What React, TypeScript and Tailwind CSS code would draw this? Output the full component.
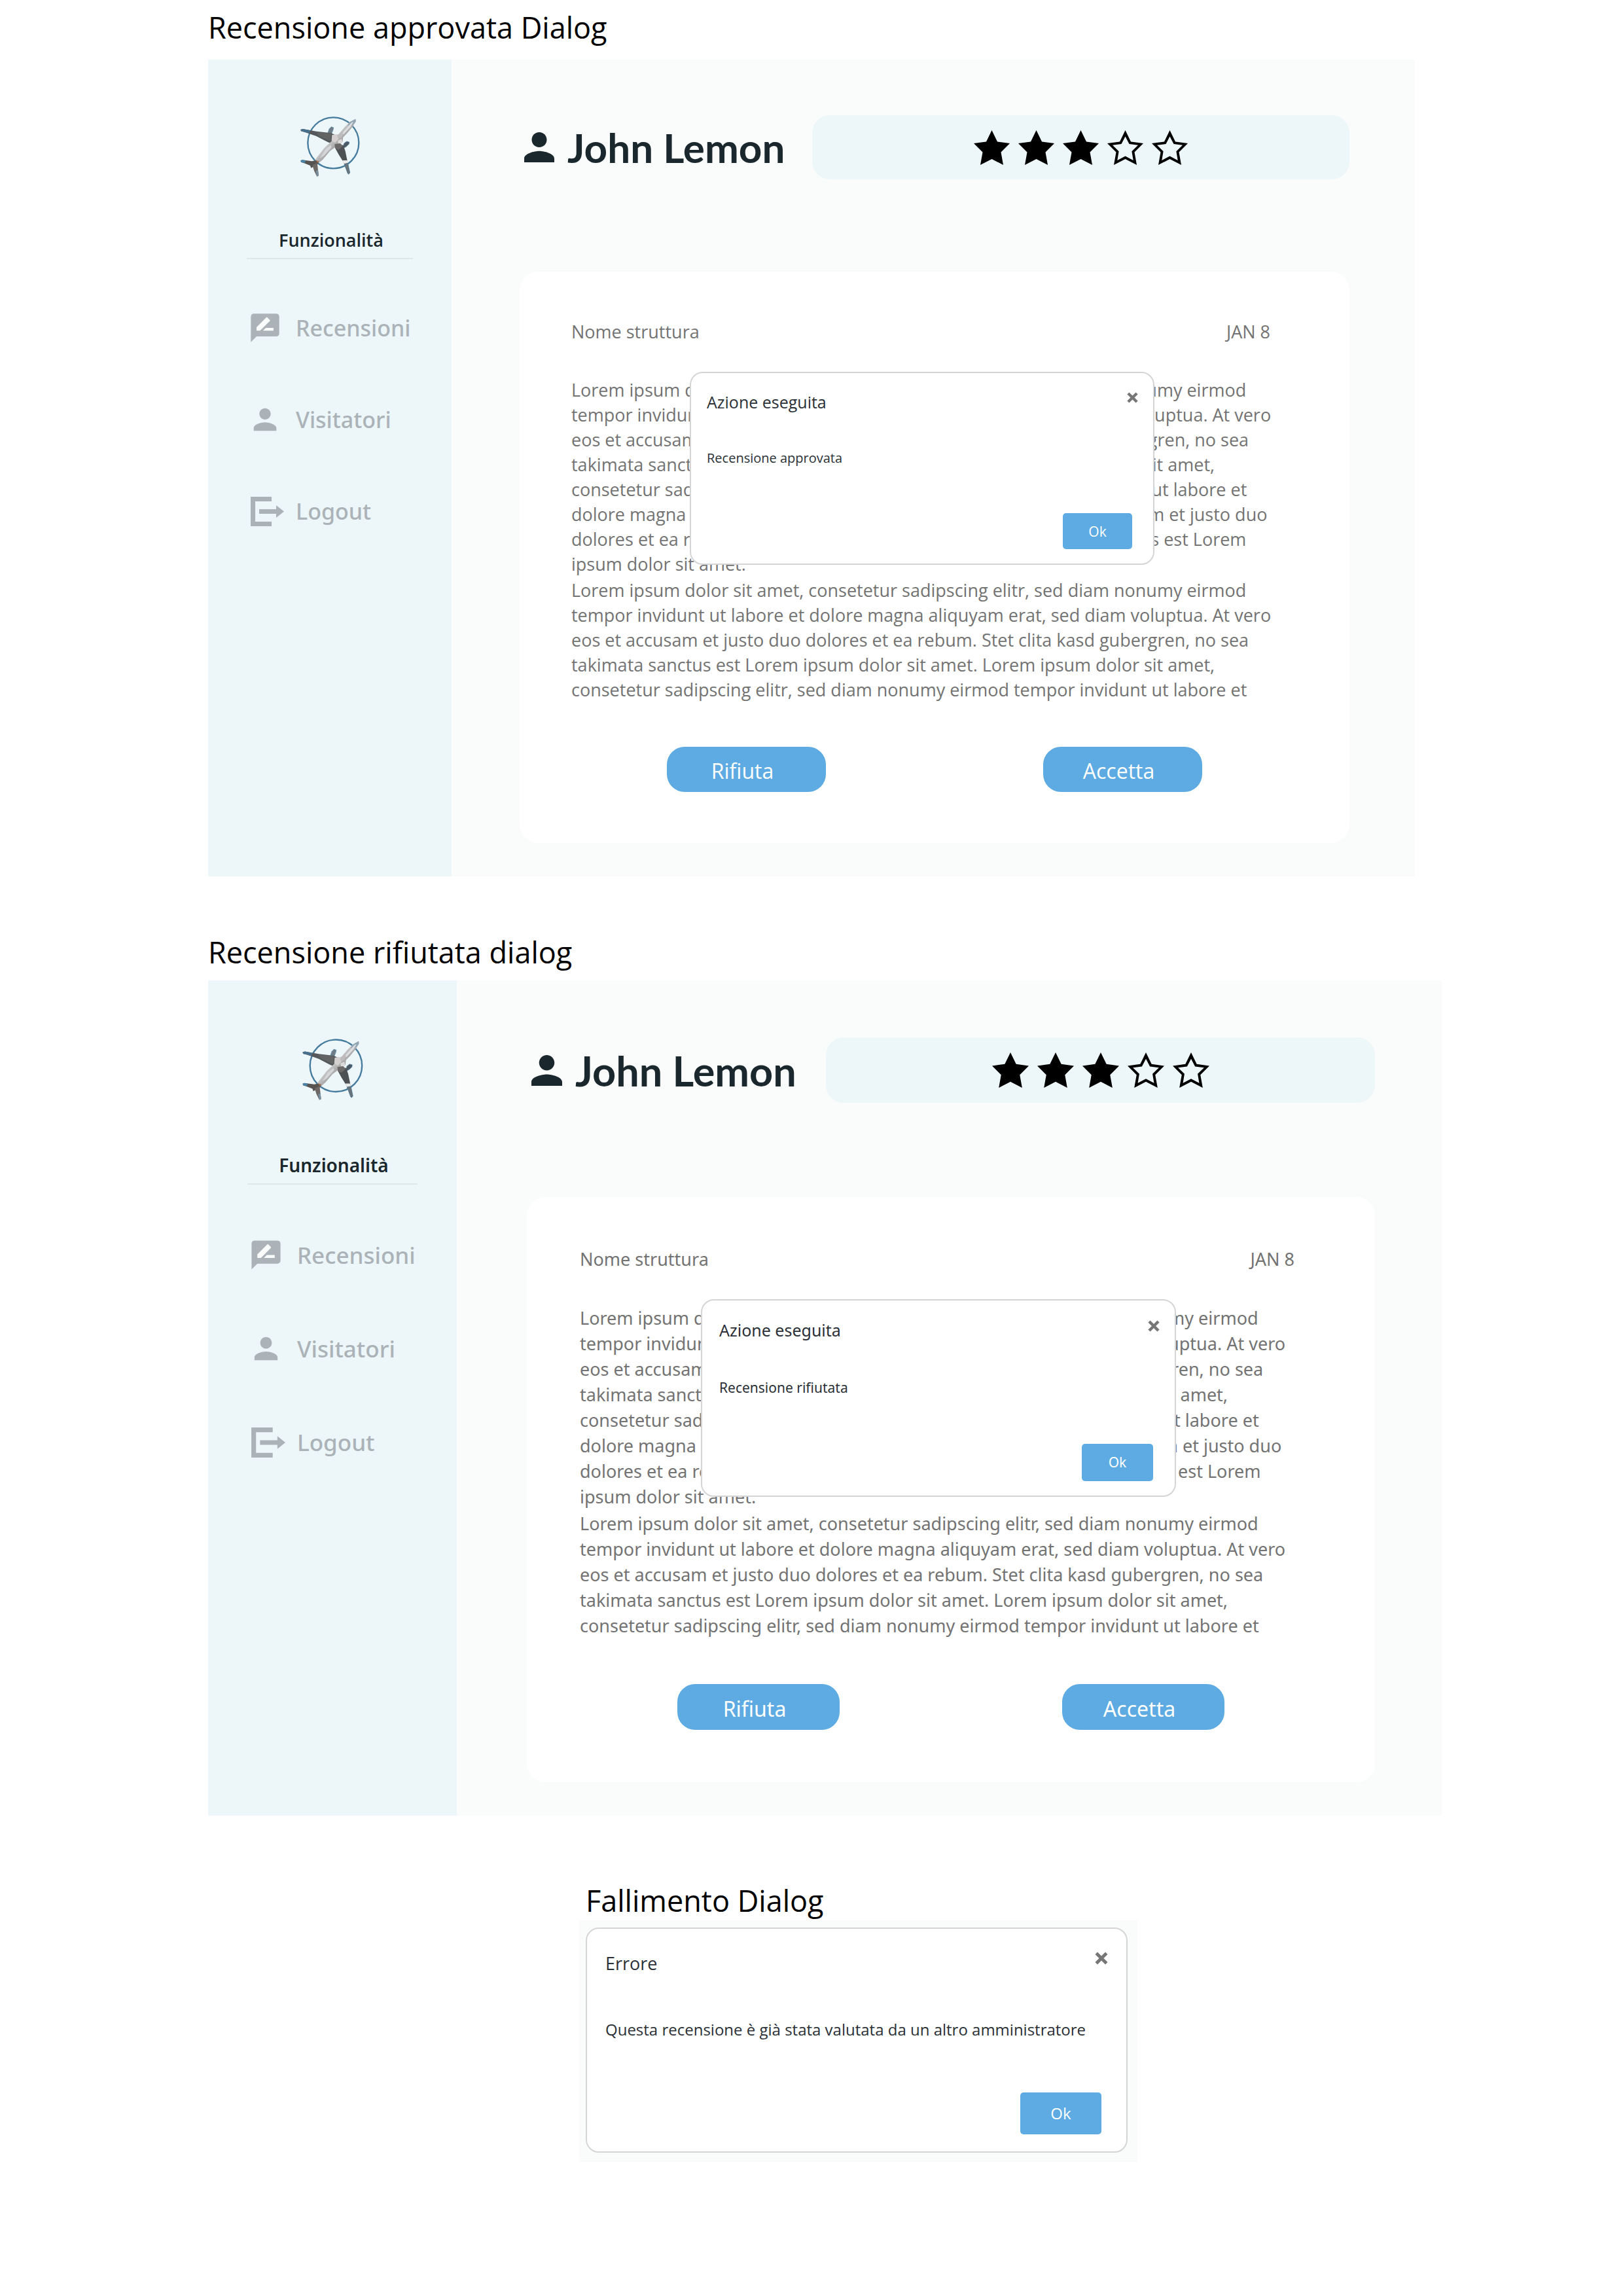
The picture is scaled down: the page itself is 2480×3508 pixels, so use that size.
import { useId } from 'react';

type Size = 'sm' | 'md' | 'lg';

const LOREM_START =
  'Lorem ipsum dolor sit amet, consetetur sadipscing elitr, sed diam nonumy eirmod tempor invidunt ut labore et dolore magna aliquyam erat, sed diam voluptua. At vero eos et accusam et justo duo dolores et ea rebum. Stet clita kasd gubergren, no sea takimata sanctus est Lorem ipsum dolor sit amet. Lorem ipsum dolor sit amet, consetetur sadipscing elitr, sed diam nonumy eirmod tempor invidunt ut labore et';
const LOREM_END =
  ' dolore magna aliquyam erat, sed diam voluptua. At vero eos et accusam et justo duo dolores et ea rebum. Stet clita kasd gubergren, no sea takimata sanctus est Lorem ipsum dolor sit amet.';

function Logo({ className }: { className: string }) {
  const id = useId();
  return (
    <svg viewBox="66 40 312 300" className={className} role="img" aria-label="Logo">
      <defs>
        <linearGradient id={id} x1="0.3" y1="0.3" x2="0.6" y2="0.6">
          <stop offset="0" stopColor="#7f98aa" />
          <stop offset="0.4" stopColor="#cfcfd1" />
          <stop offset="1" stopColor="#9c9a9a" />
        </linearGradient>
      </defs>
      <circle cx="238" cy="176" r="117" fill="none" stroke="#457b9d" strokeWidth="7" />
      <path d="M213 130 L219 112 L229 102 L239 106 L237 116 L230 134z" fill="#6f7d86" stroke="#4f87ab" strokeWidth="2" />
      <path d="M283 192 L287 178 L299 169 L311 172 L310 181 L298 193 L287 199z" fill="#4c5963" stroke="#4f87ab" strokeWidth="2" />
      <path d="M88 115 L98 112 L160 123 L228 131 L252 142 L248 168 L232 180 L212 172 L160 145 L108 127 L90 122z" fill="#55595b" />
      <path d="M88 115 L98 112 L134 119 L126 131 L108 127 L90 122z" fill="#47708c" />
      <path d="M160 126 L228 133 L226 168 L170 144z" fill="#626464" />
      <path d="M238 184 L284 186 L293 214 L303 262 L314 312 L308 320 L303 314 L283 262 L262 228z" fill="#4d5153" />
      <path d="M280 256 L302 256 L305 268 L286 272z" fill="#e8eaea" />
      <path d="M289 274 L305 270 L314 312 L308 320 L303 314z" fill="#6a7378" stroke="#4f87ab" strokeWidth="2" />
      <path d="M340 66 L341 78 L326 102 L300 133 L283 150 L280 172 L254 190 L222 214 L190 252 L174 266 L156 274 L148 268 L160 246 L196 200 L232 166 L240 142 L262 136 L290 104 L314 80z" fill={`url(#${id})`} />
      <path d="M314 80 L340 66 L341 78 L322 98 L304 96z" fill="#90a6b5" />
      <path d="M322 82 L330 80 L316 104 L286 136 L272 138z" fill="#dcdde0" />
      <path d="M262 136 L284 128 L276 150 L256 160z" fill="#bdbbbb" />
      <path d="M232 140 L252 136 L262 158 L246 176 L230 166z" fill="#d4d0cf" />
      <path d="M258 166 L276 158 L280 176 L262 184z" fill="#dcdada" />
      <path d="M244 182 L270 178 L282 190 L262 208 L246 200z" fill="#6c6a69" />
      <path d="M202 206 L226 186 L230 196 L196 234 L176 246z" fill="#d3d5d8" />
      <path d="M88 257 L96 254 L140 260 L158 256 L172 262 L166 274 L136 291 L132 280 L108 270 L90 264z" fill="#565351" />
      <path d="M88 257 L96 254 L112 257 L106 268 L90 264z" fill="#4a83aa" />
      <path d="M142 278 L164 268 L168 300 L171 326 L163 330 L150 304z" fill="#6d6765" />
      <path d="M158 304 L168 300 L171 326 L163 330z" fill="#77909f" />
      <path d="M158 256 L172 260 L166 268z" fill="#a9714f" />
    </svg>
  );
}

function PersonIcon({ className }: { className: string }) {
  return (
    <svg viewBox="4 4 16 16" className={className} fill="currentColor" aria-hidden="true">
      <path d="M12 12c2.21 0 4-1.79 4-4s-1.79-4-4-4-4 1.79-4 4 1.79 4 4 4zm0 2c-2.67 0-8 1.34-8 4v2h16v-2c0-2.66-5.33-4-8-4z" />
    </svg>
  );
}

function ReviewNavIcon() {
  return (
    <svg viewBox="0 0 24 24" className="size-full" aria-hidden="true">
      <path d="M5 4h14v11H5z" fill="#fafcfb" />
      <path
        fill="currentColor"
        d="M20 2H4c-1.1 0-1.99.9-1.99 2L2 22l4-4h14c1.1 0 2-.9 2-2V4c0-1.1-.9-2-2-2zM6 14v-2.47l6.88-6.88c.2-.2.51-.2.71 0l1.77 1.77c.2.2.2.51 0 .71L8.47 14H6zm12 0h-7.5l2-2H18v2z"
      />
    </svg>
  );
}

function VisitorNavIcon() {
  return (
    <svg viewBox="0 0 24 24" className="size-full" fill="currentColor" aria-hidden="true">
      <path d="M12 12c2.21 0 4-1.79 4-4s-1.79-4-4-4-4 1.79-4 4 1.79 4 4 4zm0 2c-2.67 0-8 1.34-8 4v2h16v-2c0-2.66-5.33-4-8-4z" />
    </svg>
  );
}

function LogoutNavIcon() {
  return (
    <svg viewBox="0 0 52 52" className="size-full overflow-visible" fill="currentColor" aria-hidden="true">
      <path d="M4 4h32v7H11v31h25v7H4zM17 23h26v-6l12 9.500l-12 9.500v-6H17z" />
    </svg>
  );
}

function Star({ filled, className }: { filled: boolean; className: string }) {
  return (
    <svg viewBox="0 0 55 53" className={className} fill="currentColor" fillRule="evenodd" aria-hidden="true">
      {filled ? (
        <path d="M27.500 0L36 17.500L55 20L41.500 33.500L45 53L27.500 44L10 53L13.500 33.500L0 20L19 17.500z" />
      ) : (
        <path d="M27.500 0L36 17.500L55 20L41.500 33.500L45 53L27.500 44L10 53L13.500 33.500L0 20L19 17.500zM27.500 9.500L21.500 21L8 22.800L17.600 32.200L15.300 46L27.500 39.600L39.700 46L37.400 32.200L47 22.800L33.500 21z" />
      )}
    </svg>
  );
}

const dialogStyles: Record<Size, Record<string, string>> = {
  sm: {
    box: 'pt-[27px] pb-[22px] pl-6',
    head: 'pr-[23px]',
    title: 'text-[25px] leading-[34px]',
    close: 'h-[21px]',
    x: 'size-[17px]',
    text: 'mt-[55px] text-[20px] leading-[28px]',
    ok: 'mt-[70px] mr-8 h-[55px] w-[106px] text-[21px]',
  },
  md: {
    box: 'pt-[28px] pb-[22px] pl-[26px]',
    head: 'pr-[23px]',
    title: 'text-[25px] leading-[35px]',
    close: 'h-[21px]',
    x: 'size-[18px]',
    text: 'mt-[56px] text-[21px] leading-[29px]',
    ok: 'mt-[71px] mr-[33px] h-[57px] w-[109px] text-[21px]',
  },
  lg: {
    box: 'pt-[34px] pb-[26px] pl-[28px]',
    head: 'pr-[28px]',
    title: 'text-[27px] leading-[37px]',
    close: 'h-[22px]',
    x: 'size-[20px]',
    text: 'mt-[66px] text-[24px] leading-[33px]',
    ok: 'mt-[80px] mr-[38px] h-[64px] w-[124px] text-[24px]',
  },
};

function MessageDialog({ size, title, text, className = '' }: { size: Size; title: string; text: string; className?: string }) {
  const s = dialogStyles[size];
  const id = useId();
  return (
    <div role="dialog" aria-labelledby={id} className={`flex flex-col rounded-[20px] border-2 border-[#d5d5d5] bg-white text-[#2b3036] ${s.box} ${className}`}>
      <div className={`flex items-start justify-between ${s.head}`}>
        <h3 id={id} className={s.title}>{title}</h3>
        <button type="button" aria-label="Chiudi" className={`flex items-center text-[#767676] ${s.close}`}>
          <svg viewBox="0 0 18 18" className={s.x} stroke="currentColor" strokeWidth="4.500" aria-hidden="true">
            <path d="M2 2L16 16M16 2L2 16" />
          </svg>
        </button>
      </div>
      <p className={s.text}>{text}</p>
      <button type="button" className={`self-end rounded-[5px] bg-[#5dabe2] text-white ${s.ok}`}>Ok</button>
    </div>
  );
}

const screenStyles = {
  sm: {
    root: "grid-cols-[372px_1fr] font-['Open_Sans',sans-serif]",
    aside: 'pt-[82px]',
    logo: 'h-[100px] w-[104px]',
    navTitle: 'mt-[75px] text-[27px] leading-[38px]',
    rule: 'mx-[59px] mt-2',
    nav: 'mt-[79px] gap-[88px] pl-[61px]',
    link: 'gap-[21px] text-[34px] leading-[52px]',
    navIcon: 'size-[52px]',
    main: 'pt-[85px] pr-[100px] pb-[51px] pl-[104px]',
    name: 'w-[447px] gap-[20px] pl-[7px] text-[62px]',
    person: 'size-[46px]',
    pill: 'h-[98px] rounded-[27px] gap-[13px]',
    star: 'h-[53px] w-[55px]',
    card: 'mt-[141px] rounded-[28px] pt-[73px] pb-[78px] text-[27px] leading-[38px]',
    cardHead: 'pr-[121px] pl-[79px]',
    body: 'mt-[51px] pr-[105px] pl-[79px]',
    actions: 'mt-[68px] px-[225px]',
    action: 'h-[69px] w-[243px]',
    dialog: 'top-[153px] left-[260px] w-[710px]',
  },
  md: {
    root: "grid-cols-[380px_1fr] font-['Noto_Sans',sans-serif]",
    aside: 'pt-[84px]',
    logo: 'h-[102px] w-[106px]',
    navTitle: 'mt-[77px] text-[28px] leading-[39px]',
    rule: 'mx-[60px] mt-2',
    nav: 'mt-[81px] gap-[90px] pl-[62px]',
    link: 'gap-[21px] text-[35px] leading-[53px]',
    navIcon: 'size-[53px]',
    main: 'pt-[87px] pr-[102px] pb-[51px] pl-[107px]',
    name: 'w-[457px] gap-[20px] pl-[7px] text-[63px]',
    person: 'size-[47px]',
    pill: 'h-[100px] rounded-[27px] gap-[13px]',
    star: 'h-[54px] w-[56px]',
    card: 'mt-[144px] rounded-[28px] pt-[75px] pb-[80px] text-[27px] leading-[39px]',
    cardHead: 'pr-[123px] pl-[81px]',
    body: 'mt-[51px] pr-[107px] pl-[81px]',
    actions: 'mt-[70px] px-[230px]',
    action: 'h-[70px] w-[248px]',
    dialog: 'top-[156px] left-[266px] w-[726px]',
  },
};

const navItems = [
  { label: 'Recensioni', Icon: ReviewNavIcon },
  { label: 'Visitatori', Icon: VisitorNavIcon },
  { label: 'Logout', Icon: LogoutNavIcon },
];

function ReviewScreen({ size, message }: { size: 'sm' | 'md'; message: string }) {
  const s = screenStyles[size];
  return (
    <div className={`grid bg-[#fafcfb] ${s.root}`}>
      <aside className={`bg-[#edf6f9] ${s.aside}`}>
        <Logo className={`mx-auto ${s.logo}`} />
        <h2 className={`pl-1 text-center font-semibold text-[#1a272d] ${s.navTitle}`}>Funzionalità</h2>
        <hr className={`border-t-2 border-[#dde8ea] ${s.rule}`} />
        <nav className={`flex flex-col font-['Noto_Sans',sans-serif] ${s.nav}`}>
          {navItems.map(({ label, Icon }) => (
            <a key={label} href="#" className={`flex items-center font-medium text-[#abb3b8] ${s.link}`}>
              <span className={`shrink-0 ${s.navIcon}`}><Icon /></span>
              {label}
            </a>
          ))}
        </nav>
      </aside>

      <main className={s.main}>
        <div className="flex items-center">
          <h2 className={`flex shrink-0 items-center font-['Lato',sans-serif] leading-none font-bold whitespace-nowrap text-[#1a272d] ${s.name}`}>
            <PersonIcon className={`shrink-0 ${s.person}`} />
            John Lemon
          </h2>
          <div role="img" aria-label="3 stelle su 5" className={`flex flex-1 items-center justify-center bg-[#edf6f9] text-black ${s.pill}`}>
            {[1, 2, 3, 4, 5].map((n) => <Star key={n} filled={n <= 3} className={s.star} />)}
          </div>
        </div>

        <article className={`relative bg-white text-[#737373] ${s.card}`}>
          <div className={`flex justify-between ${s.cardHead}`}>
            <span>Nome struttura</span>
            <span>JAN 8</span>
          </div>
          <div className={`flex flex-col gap-[2px] ${s.body}`}>
            <p>{LOREM_START + LOREM_END}</p>
            <p>{LOREM_START}</p>
          </div>
          <div className={`flex justify-between ${s.actions}`}>
            {['Rifiuta', 'Accetta'].map((label) => (
              <button key={label} type="button" className={`rounded-[27px] bg-[#5dabe2] pt-[5px] pr-3 text-[32px] text-white ${s.action}`}>
                {label}
              </button>
            ))}
          </div>
          <MessageDialog size={size} title="Azione eseguita" text={message} className={`absolute ${s.dialog}`} />
        </article>
      </main>
    </div>
  );
}

export default function App() {
  return (
    <div className="min-h-screen bg-white pt-3 font-['Open_Sans',sans-serif] text-black">
      <section className="px-[318px]">
        <h1 className="mb-[19px] text-[45px] leading-[60px]">Recensione approvata Dialog</h1>
        <ReviewScreen size="sm" message="Recensione approvata" />
      </section>

      <section className="mt-[86px] pr-[277px] pl-[318px]">
        <h1 className="mb-[13px] text-[45px] leading-[60px]">Recensione rifiutata dialog</h1>
        <ReviewScreen size="md" message="Recensione rifiutata" />
      </section>

      <section className="mt-[100px] ml-[885px] w-[853px]">
        <h1 className="pl-[10px] text-[45px] leading-[60px]">Fallimento Dialog</h1>
        <div className="bg-[#fafcfb] pt-[11px] pr-[15px] pb-[14px] pl-[10px]">
          <MessageDialog size="lg" title="Errore" text="Questa recensione è già stata valutata da un altro amministratore" />
        </div>
      </section>
    </div>
  );
}
